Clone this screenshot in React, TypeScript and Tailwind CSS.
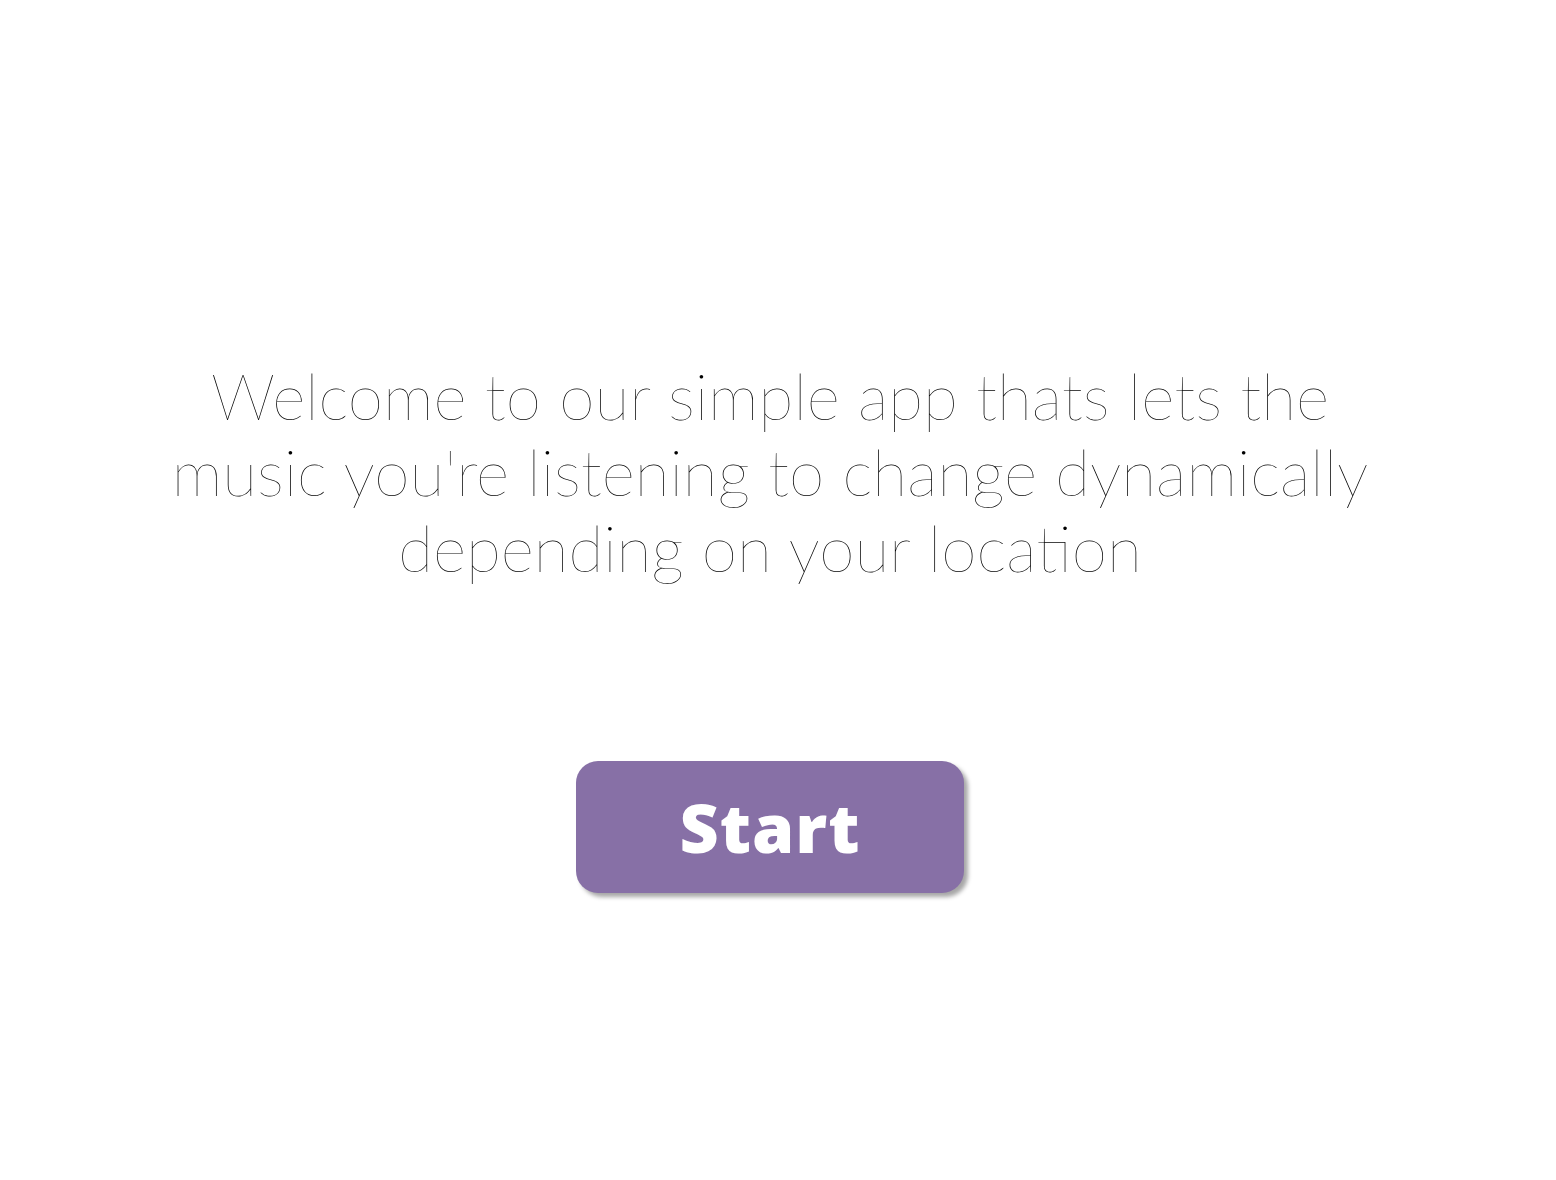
const App = () => {
  return (
    <div className="min-h-screen w-full bg-white flex flex-col items-center pt-[358px] pr-[16px]">
      <p className="w-[1220px] text-center font-['Lato',sans-serif] font-thin text-[64px] leading-[76px] text-black">
        Welcome to our simple app thats lets the music you're listening to change dynamically depending on your location
      </p>
      <button
        type="button"
        className="mt-[175px] w-[388px] h-[132px] rounded-[22px] bg-[#8770a6] text-white font-['Open_Sans',sans-serif] font-extrabold text-[68px] tracking-[1px] shadow-[4px_4px_4px_rgba(0,0,0,0.35)]"
      >
        Start
      </button>
    </div>
  );
};

export default App;
